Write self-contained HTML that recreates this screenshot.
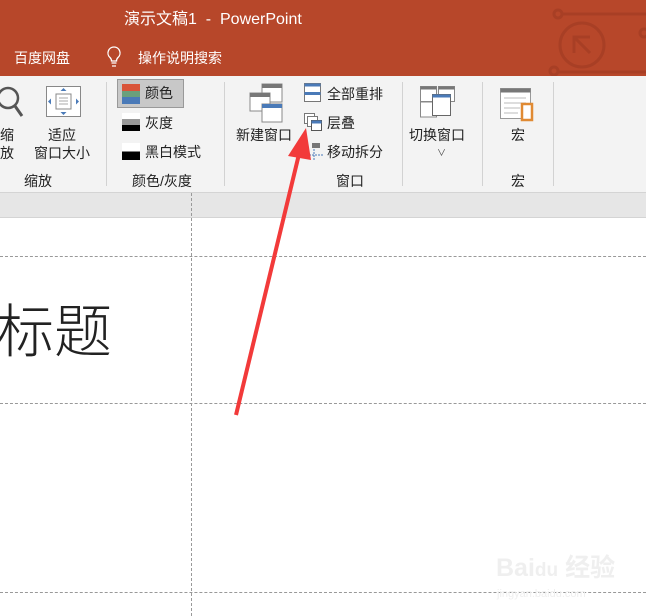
<!DOCTYPE html><html><head><meta charset="utf-8"><style>
body{margin:0;width:646px;height:616px;overflow:hidden;position:relative;background:#fff;font-family:"Liberation Sans","Noto Sans CJK SC",sans-serif;}
.a{position:absolute;white-space:nowrap}
.r{font-size:14px;color:#222;line-height:18px}
.sep{position:absolute;top:82px;width:1px;height:104px;background:#d2d2d2}
</style></head><body>
<div class="a" style="left:0;top:0;width:646px;height:76px;background:#b7472a"></div>
<svg class="a" style="left:530px;top:0" width="116" height="76"><g stroke="#a83f25" fill="none" stroke-width="3"><circle cx="28" cy="14" r="4"/><path d="M32 14H116"/><circle cx="52" cy="45" r="22"/><path d="M44 53V37H60M44 37L60 53"/><path d="M28 72H116"/><circle cx="24" cy="71" r="4"/><circle cx="114" cy="33" r="4"/></g></svg>
<div class="a" style="left:124px;top:5px;font-size:16px;color:#fff">演示文稿1 &nbsp;- &nbsp;PowerPoint</div>
<div class="a" style="left:14px;top:48px;font-size:14px;color:#fff">百度网盘</div>
<svg class="a" style="left:105px;top:45px" width="18" height="24"><path d="M9 2a6 6 0 0 0-4 10.5c1 1 1.5 2 1.5 3.5h5c0-1.5.5-2.5 1.5-3.5A6 6 0 0 0 9 2zM6.5 18h5M7 21h4" stroke="#fff" stroke-width="1.3" fill="none"/></svg>
<div class="a" style="left:138px;top:48px;font-size:14px;color:#fff">操作说明搜索</div>
<div class="a" style="left:0;top:76px;width:646px;height:116px;background:#f3f3f3"></div>
<div class="a" style="left:0;top:192px;width:646px;height:24px;background:#e6e6e6;border-top:1px solid #d4d4d4;border-bottom:1px solid #d4d4d4"></div>
<svg class="a" style="left:0;top:84px" width="24" height="36"><circle cx="8" cy="14" r="10" stroke="#555" stroke-width="2.5" fill="none"/><path d="M15 22l7 10" stroke="#555" stroke-width="3"/></svg>
<div class="a r" style="left:0;top:126px">缩</div><div class="a r" style="left:0;top:144px">放</div>
<svg class="a" style="left:46px;top:86px" width="36" height="32"><rect x="0.5" y="0.5" width="34" height="30" fill="#fff" stroke="#888"/><rect x="10" y="8" width="15" height="15" fill="none" stroke="#888"/><path d="M13 12h9M13 15h9M13 18h9" stroke="#aaa"/><path d="M17.5 2l-3 3h6zM17.5 29l-3-3h6zM2 15.5l3-3v6zM33 15.5l-3-3v6z" fill="#4a7ab8"/></svg>
<div class="a r" style="left:48px;top:126px">适应</div><div class="a r" style="left:34px;top:144px">窗口大小</div>
<div class="a r" style="left:24px;top:172px">缩放</div>
<div class="sep" style="left:106px"></div>
<div class="a" style="left:117px;top:79px;width:65px;height:27px;background:#c8c8c8;border:1px solid #999"></div>
<div class="a" style="left:122px;top:84px;width:18px;height:7px;background:#d9543a"></div>
<div class="a" style="left:122px;top:91px;width:18px;height:6px;background:#6aa07c"></div>
<div class="a" style="left:122px;top:97px;width:18px;height:7px;background:#4a7ab8"></div>
<div class="a r" style="left:145px;top:84px">颜色</div>
<div class="a" style="left:122px;top:113px;width:18px;height:18px;background:linear-gradient(#fff 33%,#999 33%,#999 66%,#000 66%)"></div>
<div class="a r" style="left:145px;top:114px">灰度</div>
<div class="a" style="left:122px;top:143px;width:18px;height:17px;background:linear-gradient(#fff 50%,#000 50%)"></div>
<div class="a r" style="left:145px;top:143px">黑白模式</div>
<div class="a r" style="left:132px;top:172px">颜色/灰度</div>
<div class="sep" style="left:224px"></div>
<svg class="a" style="left:249px;top:83px" width="36" height="40"><rect x="13" y="1" width="20" height="18" fill="#fff" stroke="#888"/><rect x="13" y="1" width="20" height="4" fill="#777"/><rect x="1" y="10" width="20" height="18" fill="#fff" stroke="#888"/><rect x="1" y="10" width="20" height="4" fill="#777"/><rect x="13" y="21" width="20" height="18" fill="#fff" stroke="#888"/><rect x="13" y="21" width="20" height="4" fill="#4a7ab8"/></svg>
<div class="a r" style="left:236px;top:126px">新建窗口</div>
<svg class="a" style="left:304px;top:83px" width="18" height="20"><rect x="0.5" y="0.5" width="16" height="18" fill="#fff" stroke="#777"/><rect x="0.5" y="0.5" width="16" height="3" fill="#4a7ab8"/><rect x="0.5" y="9" width="16" height="3" fill="#4a7ab8"/></svg>
<div class="a r" style="left:327px;top:85px">全部重排</div>
<svg class="a" style="left:304px;top:113px" width="20" height="20"><rect x="0.5" y="0.5" width="10" height="10" fill="#fff" stroke="#777"/><rect x="3.5" y="3.5" width="10" height="10" fill="#fff" stroke="#777"/><rect x="7.5" y="7.5" width="10" height="10" fill="#fff" stroke="#555"/><rect x="7.5" y="7.5" width="10" height="3" fill="#4a7ab8"/></svg>
<div class="a r" style="left:327px;top:114px">层叠</div>
<svg class="a" style="left:306px;top:142px" width="20" height="20"><rect x="6" y="1" width="8" height="5" fill="#777"/><path d="M8 7v11M3 13h14" stroke="#4a7ab8" stroke-dasharray="2 1"/></svg>
<div class="a r" style="left:327px;top:143px">移动拆分</div>
<div class="a r" style="left:336px;top:172px">窗口</div>
<div class="sep" style="left:402px"></div>
<svg class="a" style="left:420px;top:86px" width="36" height="32"><rect x="0.5" y="0.5" width="16" height="15" fill="#fff" stroke="#888"/><rect x="0.5" y="0.5" width="16" height="3" fill="#777"/><rect x="18.5" y="0.5" width="16" height="15" fill="#fff" stroke="#888"/><rect x="18.5" y="0.5" width="16" height="3" fill="#777"/><rect x="0.5" y="16" width="16" height="15" fill="#fff" stroke="#888"/><rect x="12.5" y="8.5" width="18" height="21" fill="#fff" stroke="#666"/><rect x="12.5" y="8.5" width="18" height="3" fill="#4a7ab8"/></svg>
<div class="a r" style="left:409px;top:126px">切换窗口</div>
<div class="a" style="left:437px;top:146px;font-size:9px;color:#444">∨</div>
<div class="sep" style="left:482px"></div>
<svg class="a" style="left:500px;top:88px" width="38" height="36"><rect x="0.5" y="0.5" width="30" height="30" fill="#fff" stroke="#999"/><rect x="0.5" y="0.5" width="30" height="4" fill="#777"/><path d="M4 10h22M4 15h22M4 20h16M4 25h14" stroke="#bbb"/><rect x="22" y="16" width="10" height="16" fill="#fff" stroke="#e08a33" stroke-width="2.5"/></svg>
<div class="a r" style="left:511px;top:126px">宏</div>
<div class="a r" style="left:511px;top:172px">宏</div>
<div class="sep" style="left:553px"></div>
<div class="a" style="left:0;top:256px;width:646px;border-top:1px dashed #999"></div>
<div class="a" style="left:0;top:403px;width:646px;border-top:1px dashed #999"></div>
<div class="a" style="left:0;top:592px;width:646px;border-top:1px dashed #999"></div>
<div class="a" style="left:191px;top:193px;height:423px;border-left:1px dashed #999"></div>
<div class="a" style="left:-4px;top:292px;font-size:58px;line-height:70px;color:#222;font-family:'Noto Sans CJK SC',sans-serif;font-weight:300">标题</div>
<div class="a" style="left:496px;top:548px;font-size:25px;color:#efefef;font-weight:bold">Bai<span style="font-size:19px">du</span> 经验</div>
<div class="a" style="left:497px;top:588px;font-size:11px;color:#efefef">jingyan.baidu.com</div>
<svg class="a" style="left:0;top:0" width="646" height="616"><path d="M236 415L300 150" stroke="#f23a3a" stroke-width="4"/><path d="M306 128L288 156L311 160Z" fill="#f23a3a"/></svg>
</body></html>
